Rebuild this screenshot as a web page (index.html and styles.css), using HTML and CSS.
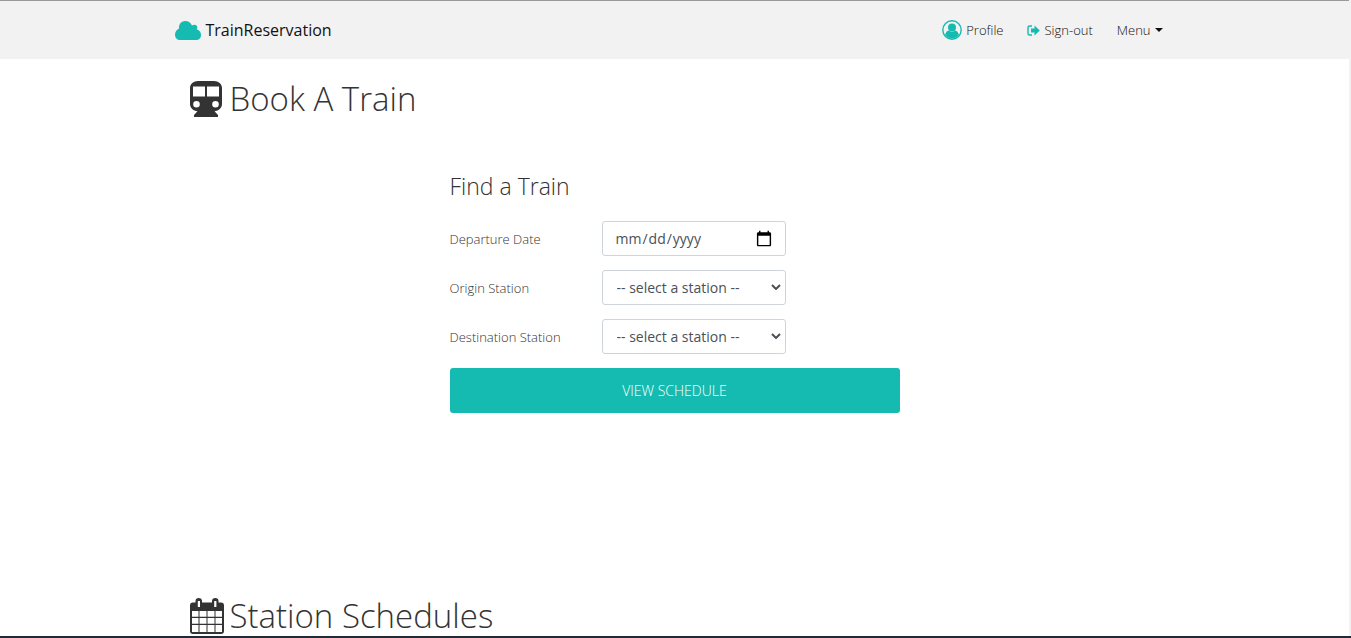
FILE: index.html
```html
<!DOCTYPE html>
<html lang="en">
<head>
<meta charset="utf-8">
<title>TrainReservation</title>
<link rel="stylesheet" href="styles.css">
</head>
<body>
<div class="page">
  <header class="navbar">
    <div class="container navbar-inner">
      <a class="brand" href="#">
        <svg class="cloud" viewBox="0 0 26 19" aria-hidden="true"><path d="M5.500 19C2 19 0 17 0 13.500C0 10.500 2 8.500 4 7.500C3.500 3 6.500 0 10.300 0C13.500 0 16 1.800 17 4.600C19.500 2.600 23 4.200 22.300 7.500L21.700 8.600C24 9 26 11 26 14C26 17 24 19 21 19Z"/></svg>
        <span>TrainReservation</span>
      </a>
      <nav class="links">
        <a class="link" href="#">
          <svg class="user" viewBox="0 0 20 20" aria-hidden="true"><circle class="ring" cx="10" cy="10" r="9.200"/><circle cx="10" cy="7.400" r="4"/><path d="M3.200 15C3.600 12 5 10.600 7 10.400C8.800 12.200 11.200 12.200 13 10.400C15 10.600 16.400 12 16.800 15C13.800 19.600 6.200 19.600 3.200 15Z"/></svg>
          <span>Profile</span>
        </a>
        <a class="link" href="#">
          <svg class="exit" viewBox="0 0 13 11" aria-hidden="true"><path class="door" d="M5 1H2.500Q1 1 1 2.500V8.500Q1 10 2.500 10H5"/><path d="M4 3.400H7.500V0.600L12.800 5.500L7.500 10.400V7.600H4Z"/></svg>
          <span>Sign-out</span>
        </a>
        <button class="link menu" type="button">Menu<span class="caret"></span></button>
      </nav>
    </div>
  </header>
  <main class="container content">
    <section class="booking">
      <h1 class="title">
        <svg class="icon-train" viewBox="0 0 32 36" aria-hidden="true"><path fill-rule="evenodd" d="M8 0H24C28.500 0 32 3 32 7V23C32 27 28.500 30 24.500 30.200L28 34V36H4V34L7.500 30.200C3.500 30 0 27 0 23V7C0 3 3.500 0 8 0ZM3 5.500V15.500H15V5.500ZM17 5.500V15.500H29V5.500ZM6.500 20A3.300 3.300 0 1 0 6.500 26.600A3.300 3.300 0 1 0 6.500 20ZM25.500 20A3.300 3.300 0 1 0 25.500 26.600A3.300 3.300 0 1 0 25.500 20Z"/></svg>
        <span>Book A Train</span>
      </h1>
      <form class="finder">
        <h2 class="subtitle">Find a Train</h2>
        <div class="row">
          <label for="date">Departure Date</label>
          <input class="control date" id="date" type="date">
        </div>
        <div class="row">
          <label for="origin">Origin Station</label>
          <div class="select-wrap">
            <select class="control" id="origin"><option>-- select a station --</option></select>
            <svg class="chevron" viewBox="0 0 10 6" aria-hidden="true"><path d="M1 1L5 5L9 1"/></svg>
          </div>
        </div>
        <div class="row">
          <label for="destination">Destination Station</label>
          <div class="select-wrap">
            <select class="control" id="destination"><option>-- select a station --</option></select>
            <svg class="chevron" viewBox="0 0 10 6" aria-hidden="true"><path d="M1 1L5 5L9 1"/></svg>
          </div>
        </div>
        <button class="submit" type="submit">VIEW SCHEDULE</button>
      </form>
    </section>
    <section>
      <h1 class="title">
        <svg class="icon-calendar" viewBox="0 0 34 36" aria-hidden="true"><path fill-rule="evenodd" d="M3 4.500H5.500V3C5.500 1 6.800 0 8.700 0S12 1 12 3V4.500H22V3C22 1 23.300 0 25.300 0S28.500 1 28.500 3V4.500H31Q34 4.500 34 7.500V33Q34 36 31 36H3Q0 36 0 33V7.500Q0 4.500 3 4.500ZM7.800 3V9H10V3ZM24.200 3V9H26.400V3ZM2 13V18.800H8.500V13ZM9.500 13V18.800H16.500V13ZM17.500 13V18.800H24.500V13ZM25.500 13V18.800H32V13ZM2 20V25.800H8.500V20ZM9.500 20V25.800H16.500V20ZM17.500 20V25.800H24.500V20ZM25.500 20V25.800H32V20ZM2 27V34H8.500V27ZM9.500 27V34H16.500V27ZM17.500 27V34H24.500V27ZM25.500 27V34H32V27Z"/></svg>
        <span>Station Schedules</span>
      </h1>
    </section>
  </main>
  <div class="bottom-bar"></div>
</div>
</body>
</html>
```
FILE: styles.css
```css
* { box-sizing: border-box; }

body {
  margin: 0;
  background: #fff;
  color: #333;
  font-family: "Open Sans", "Noto Sans", sans-serif;
  font-size: 13px;
  font-weight: 300;
}

.page {
  min-height: 100vh;
  border-right: 2px solid #f2f2f2;
}

.container {
  max-width: 1000px;
  margin: 0 auto;
}

.navbar {
  background: #f2f2f2;
  border-top: 1px solid #999;
}

.navbar-inner {
  display: flex;
  align-items: center;
  justify-content: space-between;
  height: 58px;
  padding-right: 12px;
}

.brand {
  display: flex;
  align-items: center;
  gap: 5px;
  color: #111;
  font-size: 16px;
  font-weight: 400;
  text-decoration: none;
}

.cloud { width: 26px; height: 19px; fill: #15bbb0; }

.links {
  display: flex;
  align-items: center;
  gap: 24px;
}

.link {
  display: flex;
  align-items: center;
  gap: 4px;
  color: #111;
  font: inherit;
  text-decoration: none;
}

.user { width: 20px; height: 20px; fill: #15bbb0; }
.ring { fill: none; stroke: #15bbb0; stroke-width: 1.4; }
.exit { width: 13px; height: 11px; fill: #15bbb0; }
.door { fill: none; stroke: #15bbb0; stroke-width: 1.4; }

.menu {
  padding: 0;
  border: 0;
  background: none;
}

.caret {
  border: 4px solid transparent;
  border-top-color: #111;
  border-bottom: 0;
}

.content { padding: 18px 15px 0; }

.booking { height: 517px; }

.title {
  display: flex;
  align-items: center;
  gap: 8px;
  margin: 0;
  font-size: 33px;
  font-weight: 300;
  line-height: 44px;
}

.icon-train { width: 32px; height: 36px; fill: #333; }
.icon-calendar { width: 34px; height: 36px; margin-right: -2px; fill: #333; }

.finder {
  display: flex;
  flex-direction: column;
  gap: 14px;
  max-width: 450px;
  margin: 49px auto 0;
}

.subtitle {
  margin: 0 0 5px;
  font-size: 23px;
  font-weight: 300;
  line-height: 32px;
}

.row {
  display: grid;
  grid-template-columns: 152px 184px;
  align-items: center;
}

.control {
  width: 100%;
  height: 35px;
  padding: 0 12px;
  border: 1px solid #ced4da;
  border-radius: 3px;
  background: #fff;
  color: #495057;
  font-family: inherit;
  font-size: 14px;
  font-weight: 400;
}

.date::-webkit-calendar-picker-indicator {
  width: 18px;
  height: 18px;
  padding: 0;
}

.select-wrap { position: relative; }

.select-wrap .control {
  display: block;
  padding-left: 14px;
  appearance: none;
}

.chevron {
  position: absolute;
  top: 14px;
  right: 5px;
  width: 10px;
  height: 6px;
  fill: none;
  stroke: #495057;
  stroke-width: 2;
  pointer-events: none;
}

.submit {
  height: 45px;
  border: 0;
  border-radius: 3px;
  background: #15bbb0;
  color: #fff;
  font: inherit;
  font-size: 14px;
}

.bottom-bar {
  position: fixed;
  right: 0;
  bottom: 0;
  left: 0;
  height: 2px;
  background: #202b35;
}
```
